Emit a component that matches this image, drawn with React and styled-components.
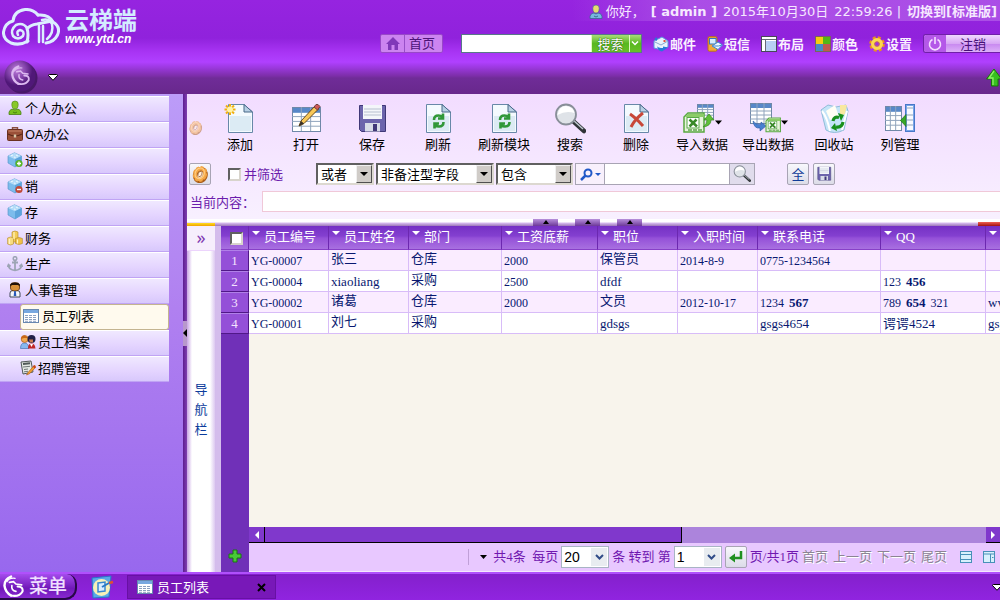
import React, { useState } from "react";
import styled, { createGlobalStyle, css } from "styled-components";

const GlobalStyle = createGlobalStyle`
  * {
    box-sizing: border-box;
  }
  body {
    margin: 0;
    overflow: hidden;
    font-family: "Noto Sans", "Noto Sans CJK SC", sans-serif;
    font-size: 13px;
    line-height: 18px;
    color: #000;
  }
  button, input, select {
    font: inherit;
    color: inherit;
    margin: 0;
    padding: 0;
    border-radius: 0;
  }
  button {
    border: 0;
    background: none;
    cursor: pointer;
    white-space: nowrap;
  }
  a {
    color: inherit;
    text-decoration: none;
  }
  svg {
    display: block;
    flex: none;
  }
`;

/* ---------- icons ---------- */

const Svg = ({ w = 16, h = w, vw = w, vh = h, children }) => (
  <svg width={w} height={h} viewBox={`0 0 ${vw} ${vh}`} aria-hidden="true">
    {children}
  </svg>
);

const Caret = ({ color = "#000", w = 8, h = 4, stroke }) => (
  <Svg w={w} h={h}>
    <path d={`M0 0H${w}L${w / 2} ${h}Z`} fill={color} stroke={stroke} />
  </Svg>
);

const CaretOutlined = () => (
  <Svg w={10} h={7}>
    <path d="M.5 1.5Q.5.5 1.5.5H8.500Q9.500.5 9.500 1.500L5 6.300Z" fill="#fff" stroke="#000" />
  </Svg>
);

const UserIcon = ({ head = "#e8dc70", body = "#78b8e0", line = "#3a6a90" }) => (
  <Svg>
    <path d="M2 14.500Q1.500 9.500 6 9L8 10 10 9Q14.500 9.500 14 14.500Z" fill={body} stroke={line} strokeWidth=".8" />
    <path d="M4.800 4.500Q4.500 1 8 1T11.200 4.500Q11 9 8 9T4.800 4.500Z" fill={head} stroke={line} strokeWidth=".6" />
    <path d="M6 12Q8 14 10 12" fill="none" stroke={line} />
  </Svg>
);

const BriefcaseIcon = () => (
  <Svg>
    <path d="M5.500 4V1.800H10.500V4" fill="none" stroke="#8a5040" strokeWidth="1.400" />
    <rect x=".5" y="3.500" width="15" height="11" rx="1" fill="#9a5038" stroke="#6a3020" />
    <path d="M1 8Q8 12 15 8" fill="none" stroke="#5a2818" strokeWidth="1.200" />
    <path d="M1.500 5H14.500" stroke="#c88468" />
    <rect x="6.800" y="8.500" width="2.400" height="3" fill="#d8c8a8" />
  </Svg>
);

const CubeIcon = ({ badge }) => (
  <Svg>
    <path d="M1 4L7.500.8 14.500 4V11L8 15 1 11Z" fill="#7cbcec" stroke="#5090c8" strokeWidth=".6" />
    <path d="M1 4L7.500.8 14.500 4 8 7.200Z" fill="#b4dcf8" />
    <path d="M8 7.200L14.500 4V11L8 15Z" fill="#5ca4dc" />
    <path d="M4 3.800L6 3M9 3L11 4M7 5L8.500 5.500" stroke="#eef8ff" />
    {badge && <circle cx="12" cy="11.500" r="3.600" fill={badge === "plus" ? "#58b428" : "#c04838"} />}
    {badge && <path d={badge === "plus" ? "M10 11.500H14M12 9.500V13.500" : "M10 11.500H14"} stroke="#fff" strokeWidth="1.400" />}
  </Svg>
);

const CoinsIcon = () => (
  <Svg>
    <path d="M5 2Q8 0 11 2V12H5Z" fill="#f4cc58" stroke="#b08828" strokeWidth=".6" />
    <path d="M.6 8Q3.500 6 6.500 8V14Q3.500 16 .6 14Z" fill="#f8dc80" stroke="#b08828" strokeWidth=".6" />
    <path d="M8.500 8.500Q12 6.500 15.400 8.500V13.500Q12 15.500 8.500 13.500Z" fill="#f0c048" stroke="#b08828" strokeWidth=".6" />
    <path d="M7 2V9M2.500 9V14M10.500 9.500V13.500" stroke="#fff4c0" strokeWidth="1.200" />
  </Svg>
);

const AnchorIcon = () => (
  <Svg>
    <circle cx="8" cy="2.500" r="1.800" fill="none" stroke="#9ca4b4" strokeWidth="1.500" />
    <path d="M8 4V14M5 6.500H11M1.500 9.500Q2 14 8 14.300 14 14 14.500 9.500M.5 11L1.500 8.800 3.500 10.500M15.500 11L14.500 8.800 12.500 10.500" fill="none" stroke="#9ca4b4" strokeWidth="1.800" />
  </Svg>
);

const ManagerIcon = () => (
  <Svg>
    <path d="M3 15V11Q3 8.500 6 8.500H10Q13 8.500 13 11V15Z" fill="#f4f6fa" stroke="#404858" />
    <path d="M3.500 3Q3.500 .7 8 .7T12.500 3V6Q12.500 9 8 9T3.500 6Z" fill="#d89038" stroke="#5a3008" strokeWidth=".8" />
    <path d="M3.300 4.500V2.500Q4 .5 8 .5T12.700 2.500V4.500L11 3H5Z" fill="#201008" />
    <path d="M7.200 9H8.800L9.300 14H6.700Z" fill="#2858b8" />
  </Svg>
);

const PeopleIcon = () => (
  <Svg>
    <path d="M.5 14.500Q.5 9 4.500 9T9 14.500Z" fill="#88b8f0" stroke="#3868a8" strokeWidth=".6" />
    <circle cx="4.700" cy="5" r="3.500" fill="#f0a850" stroke="#a85818" strokeWidth=".7" />
    <path d="M1 5Q1 1 5 1.500L8 4 4 4Z" fill="#c86818" />
    <path d="M8 14.500Q8 9.500 11.500 9.500T15.500 14.500Z" fill="#c02828" />
    <circle cx="11.500" cy="5" r="4" fill="#202048" />
    <path d="M9 5.500H13V8.500H10Z" fill="#c87850" />
    <path d="M10 10L11.500 13 13 10Z" fill="#fff" />
  </Svg>
);

const NoteIcon = () => (
  <Svg>
    <path d="M1 2L11 1 13 12 3 14Z" fill="#e4e8e4" stroke="#505858" />
    <path d="M3 4L10 3.300" stroke="#505858" strokeWidth="2" />
    <path d="M3 7L10 6.300M4 9.500L8 9M4 11.800L8 11.300" stroke="#707878" />
    <path d="M14.500 5L8 12.500 6.500 15 9.500 13.800 16 7Z" fill="#f0a030" stroke="#a85810" strokeWidth=".6" />
    <path d="M13.500 6L15 7.800" stroke="#d03020" strokeWidth="1.500" />
  </Svg>
);

const ListIcon = () => (
  <Svg w={16} h={14}>
    <rect x=".5" y=".5" width="15" height="13" fill="#fff" stroke="#6888b0" />
    <path d="M1 2.500H15" stroke="#78a8e0" strokeWidth="3" />
    <path d="M2 6.500H14M2 8.500H14M2 10.500H14M2 12.300H14" stroke="#8ca0c0" strokeDasharray="3 1" />
  </Svg>
);

const CookieIcon = ({ size = 18, faded }) => (
  <svg width={size} height={size} viewBox="0 0 18 18" opacity={faded ? 0.5 : 1} aria-hidden="true">
    <g transform="rotate(25 9 9)">
      <ellipse cx="9.800" cy="9.800" rx="5" ry="6" fill="none" stroke="#a85c18" strokeWidth="4.500" />
      <ellipse cx="9" cy="9" rx="5.800" ry="6.800" fill="none" stroke="#f0a040" strokeWidth="2.500" strokeDasharray="3 1.500" />
      <ellipse cx="9" cy="9" rx="4.500" ry="5.500" fill="none" stroke="#f4a848" strokeWidth="3.500" />
      <ellipse cx="8.500" cy="8.500" rx="4.500" ry="5.500" fill="none" stroke="#ffd088" strokeWidth="1" />
      <ellipse cx="9" cy="9" rx="1.800" ry="2.800" fill="#fff0e0" stroke="#a05818" strokeWidth=".7" />
    </g>
  </svg>
);

const PageShape = () => (
  <>
    <path d="M4.500 1.500H20L28.500 9V29.500H4.500Z" fill="#f4fafe" stroke="#6888a8" />
    <path d="M6 13H27V28H6Z" fill="#dcebf4" />
    <path d="M20 1.500V9H28.500Z" fill="#b8d0e4" stroke="#486888" />
  </>
);

const AddIcon = () => (
  <Svg w={32}>
    <PageShape />
    <path d="M6 1V12M.5 6.500H11.500M2 2.500L10 10.500M10 2.500L2 10.500" stroke="#f0b010" strokeWidth="2" />
    <circle cx="6" cy="6.500" r="3" fill="#fff4a8" />
  </Svg>
);

const TableGrid = ({ x = 0, y = 0, w = 24, h = 24 }) => (
  <>
    <rect x={x + 0.5} y={y + 0.5} width={w} height={h} fill="#fff" stroke="#7088a8" />
    <rect x={x + 1} y={y + 1} width={w - 1} height={h / 5} fill="#5888c8" />
    <path
      d={`M${x + w / 3} ${y}v${h}M${x + (w * 2) / 3} ${y}v${h}M${x} ${y + h * 0.4}h${w}M${x} ${y + h * 0.6}h${w}M${x} ${y + h * 0.8}h${w}`}
      stroke="#90a4bc"
    />
  </>
);

const OpenIcon = () => (
  <Svg w={32}>
    <TableGrid x={2} y={4} w={28} h={24} />
    <path d="M25 3L11 18 9 23 14 20.500 28.500 6Z" fill="#f8c858" stroke="#684818" />
    <path d="M24 4L26 1.500Q28 .5 30 3.500L27.500 7Z" fill="#d05858" stroke="#704040" />
    <path d="M11 18L9 23 14 20.500Z" fill="#383028" />
  </Svg>
);

const DiskIcon = ({ size = 32 }) => (
  <Svg w={size} vw={32} vh={32}>
    <path d="M3.500 2.500H29.500V28.500H5.500L3.500 26.500Z" fill="#6c64ac" stroke="#403878" />
    <rect x="7" y="2" width="19" height="14" fill="#f4f6fa" />
    <path d="M8 6H25M8 9H25M8 12H25" stroke="#b8c0d0" />
    <rect x="9" y="20" width="15" height="8.500" fill="#d8dce8" />
    <rect x="17" y="21" width="4" height="7" fill="#403878" />
  </Svg>
);

const RefreshIcon = () => (
  <Svg w={32}>
    <PageShape />
    <path
      d="M12 17Q12 12.500 16.500 12.500 19 12.500 20.500 14M21 10.500V15.500H16M21.500 19Q21.500 23.500 17 23.500 14.500 23.500 13 22M12.500 25.500V20.500H17"
      fill="none"
      stroke="#309838"
      strokeWidth="2.600"
    />
  </Svg>
);

const MagnifierIcon = ({ size = 32 }) => (
  <Svg w={size} vw={32} vh={32}>
    <path d="M19 18L30 28" stroke="#303438" strokeWidth="4.500" strokeLinecap="round" />
    <path d="M19 17L29 26" stroke="#c0c8d0" strokeWidth="1.500" />
    <circle cx="12" cy="11.500" r="10" fill="#dfe3e8" stroke="#888e98" strokeWidth="1.800" />
    <path d="M3.500 12Q5 3 12 3 19 3.500 20.500 10 12 7 3.500 12Z" fill="#fff" />
  </Svg>
);

const DeleteIcon = () => (
  <Svg w={32}>
    <PageShape />
    <path d="M10 11Q16 15 23 23M23 10Q15 16 11 24" fill="none" stroke="#c84838" strokeWidth="3" />
  </Svg>
);

const ExcelBox = ({ x, y, s = 1 }) => (
  <g transform={`translate(${x} ${y}) scale(${s})`}>
    <path d="M4 0H20V19H0V4Z" fill="#e8f4dc" stroke="#58a840" strokeWidth="1.500" />
    <path d="M1 4L4 1H20V4Z" fill="#8ccc68" />
    <rect x="3" y="4.500" width="12" height="10.500" fill="#fff" stroke="#58a848" />
    <path d="M5.500 6.500L13 13.500M12.500 6.500L5.500 13.500" stroke="#388828" strokeWidth="2.500" />
    <path d="M4 17H18" stroke="#80b870" strokeWidth="2" strokeDasharray="4 1" />
  </g>
);

const ImportIcon = () => (
  <Svg w={40} h={32}>
    <TableGrid x={15} y={1} w={16} h={14} />
    <ExcelBox x={2} y={10} />
    <path d="M21 24Q29 23 29 17H32L27 11 22 17H25Q25 21 21 24Z" fill="#60c038" stroke="#388820" strokeWidth=".7" />
    <path d="M33 17.500H40L36.500 21.500Z" />
  </Svg>
);

const ExportIcon = () => (
  <Svg w={40} h={32}>
    <TableGrid x={2} y={0} w={21} h={20} />
    <path d="M5 18Q6 26 12 25V28L18 23 13 19V21.500Q8 22 5 18Z" fill="#4880d0" stroke="#2858a0" strokeWidth=".6" />
    <ExcelBox x={18} y={15} s={0.72} />
    <path d="M33 17.500H40L36.500 21.500Z" />
  </Svg>
);

const RecycleIcon = () => (
  <Svg w={32}>
    <path d="M3 7L10 2 18 4 28 2 30 8 26 27Q16 32 8 27Z" fill="#c4e4f8" stroke="#90bcd8" />
    <path d="M8 8L17 2 21 14 12 17Z" fill="#fffef4" />
    <path d="M22 2L29 2 27 11 22 13Z" fill="#f8e8a0" />
    <path d="M4 8Q9 14 12 28M29 8L24 27" fill="none" stroke="#fff" strokeWidth="2" />
    <path d="M15 18Q16 13 21 14.500M25 19Q24 25 18 24" fill="none" stroke="#18901c" strokeWidth="3.200" />
    <path d="M20 10L26 12 23 18ZM19 28L13 25 17 20Z" fill="#18901c" />
  </Svg>
);

const ColumnsIcon = () => (
  <Svg w={32}>
    <TableGrid x={1} y={3} w={16} h={24} />
    <rect x="21.500" y="1.500" width="9" height="27" fill="#78a4e8" stroke="#4878c8" />
    <rect x="23" y="3" width="6" height="24" fill="#f8faff" />
    <path d="M23 5H29M23 12H29M23 17H29M23 22H29" stroke="#90a4bc" />
    <path d="M16.500 17.500L22 11.500V23.500Z" fill="#38a828" stroke="#207018" strokeWidth=".7" />
  </Svg>
);

const MailIcon = () => (
  <Svg>
    <path d="M1 5L9 1 15 5V11L9 14 1 12Z" fill="#e8f2fc" stroke="#5898e0" />
    <path d="M1 5.500L8 9 15 5" fill="none" stroke="#88a8d0" />
    <path d="M1 3L4 5V1M9 15.500L15 11.500 10 10.500V12Q5 12 4 10 5 15 9 15.500Z" fill="#2878d8" />
    <rect x="10.500" y="4" width="2" height="2" fill="#e05040" />
  </Svg>
);

const SmsIcon = () => (
  <Svg>
    <rect x="1" y=".7" width="9" height="14.500" rx="1.500" fill="#f4a838" stroke="#b87018" />
    <rect x="2.500" y="2.500" width="6.500" height="5.500" fill="#d8ecfc" stroke="#3878c0" />
    <path d="M5 10L11 6 15.500 9 11 13.500Z" fill="#f0f8ff" stroke="#4088d0" />
    <path d="M6 10L11.500 10 15 9" fill="none" stroke="#4088d0" />
  </Svg>
);

const LayoutIcon = () => (
  <Svg>
    <rect x=".5" y=".5" width="15" height="15" fill="#fff" stroke="#484858" />
    <path d="M1 3.500H15M4.500 4V15" stroke="#686878" />
    <rect x="5" y="5" width="10" height="10" fill="#b8d0f4" />
  </Svg>
);

const ColorIcon = () => (
  <Svg>
    <rect width="16" height="16" fill="#786858" />
    <rect x="1" y="1" width="7" height="7" fill="#f8cc10" />
    <rect x="8" y="1" width="7" height="7" fill="#50b818" />
    <rect x="1" y="8" width="7" height="7" fill="#4888c8" />
    <rect x="8" y="8" width="7" height="7" fill="#c05850" />
  </Svg>
);

const GearIcon = () => (
  <Svg>
    <circle cx="8" cy="8" r="6.300" fill="none" stroke="#e89020" strokeWidth="3" strokeDasharray="2.900 2.048" />
    <circle cx="8" cy="8" r="4.300" fill="none" stroke="#fcd850" strokeWidth="3.400" />
    <circle cx="8" cy="8" r="2.300" fill="#a030e0" stroke="#d88818" strokeWidth=".7" />
  </Svg>
);

const HomeIcon = () => (
  <Svg w={14}>
    <path d="M7 0L14 7H12V13H8.500V8H5.500V13H2V7H0Z" fill="#8038b8" />
  </Svg>
);

const PowerIcon = () => (
  <Svg w={14}>
    <path d="M4.500 2.500A5.500 5.500 0 1 0 9.500 2.500M7 0V7" fill="none" stroke="#f4dcff" strokeWidth="1.600" />
  </Svg>
);

const GreenUp = () => (
  <Svg w={16} h={19}>
    <path d="M8 1L15.500 11H12V18H5.500V11H.500Z" fill="#38c020" stroke="#187808" />
    <path d="M8 3L3 10H7V17" fill="none" stroke="#90f068" strokeWidth="1.300" />
  </Svg>
);

const Swirl = ({ color = "#fff" }) => (
  <g fill="none" stroke={color} strokeLinecap="round">
    <path d="M11 2Q3 5 3 13 4 21 11 25" strokeWidth="3" />
    <path d="M11 25Q21 27 25 20 26 14 19 14" strokeWidth="2.500" />
    <path d="M6 8Q9 3 16 4" strokeWidth="1.500" />
    <path d="M9 9L14 8 17 11 24 12" strokeWidth="2" />
    <path d="M12 13Q11 19 17 20" strokeWidth="2" />
  </g>
);

const OrbIcon = () => (
  <Svg w={34}>
    <defs>
      <radialGradient id="orb" cx="40%" cy="30%">
        <stop offset="0" stopColor="#c080dc" />
        <stop offset=".6" stopColor="#8040a8" />
        <stop offset="1" stopColor="#501878" />
      </radialGradient>
    </defs>
    <circle cx="18" cy="18" r="15.500" fill="#481868" />
    <circle cx="16" cy="16" r="15.500" fill="url(#orb)" />
    <g transform="translate(6 5) scale(.75)">
      <Swirl color="#dcb8f0" />
    </g>
  </Svg>
);

const CloudLogo = () => (
  <Svg w={58} h={38}>
    <g fill="none" stroke="#dceeff" strokeLinecap="round" strokeLinejoin="round">
      <path d="M26 33Q18 38 9 35 1 31 1.500 24 3 15 11 13 12 3 23 1.500 31 1 36 7" strokeWidth="3" />
      <path d="M36 7Q47 6 51 14 59 19 55.500 27 52 34 44 35" strokeWidth="3" />
      <path d="M16 27Q14 23 18 22 23 23 21 28 16 33 11 28 8 22 14 17 21 14 25 20" strokeWidth="2.500" />
      <path d="M25 20Q27 27 25 34M25 21Q28 17 35 16L50 13" strokeWidth="3" />
      <path d="M37 18V34M41 18V34" strokeWidth="2.500" />
      <path d="M40 12Q47 10 50 16 52 25 45 31" strokeWidth="2.500" />
    </g>
  </Svg>
);

const DesktopIcon = () => (
  <Svg w={24}>
    <path d="M2 3L21 1 19 22 3 23Z" fill="#58a8e8" stroke="#2878c8" />
    <circle cx="11.500" cy="12.500" r="8.500" fill="#f8f0b8" />
    <path d="M8 8L15 7 15 16 8 17Z" fill="#d8ecff" stroke="#3888d0" strokeWidth="1.500" />
    <path d="M12 12L19 8" stroke="#2878c8" strokeWidth="2" />
    <path d="M19 8L23 7" stroke="#e05030" strokeWidth="2.500" />
  </Svg>
);

const PlusIcon = () => (
  <Svg w={14}>
    <path d="M5 1H9V5H13V9H9V13H5V9H1V5H5Z" fill="#48c838" stroke="#187810" />
  </Svg>
);

const EnterIcon = () => (
  <Svg w={14}>
    <path d="M12 1V8H4" fill="none" stroke="#209020" strokeWidth="2.500" />
    <path d="M0 8L6 3.500V12.500Z" fill="#209020" />
  </Svg>
);

const PaneIcon = ({ side }) => (
  <Svg w={12}>
    <rect x=".5" y=".5" width="11" height="11" fill="#d8f0fc" stroke="#4890b8" />
    {side ? (
      <path d="M1 3H11M7.500 3V11M9 6.500H10.500" stroke="#4890b8" />
    ) : (
      <path d="M1 3.500H11M1 8.500H11" stroke="#4890b8" />
    )}
  </Svg>
);

/* ---------- header ---------- */

const Page = styled.div`
  height: 100vh;
  display: flex;
  flex-direction: column;
  overflow: hidden;
`;

const Header = styled.header`
  flex: none;
  height: 94px;
  color: #fff;
  background: linear-gradient(
    #9624e0 0,
    #9022dc 38px,
    #a834f4 52px,
    #b040ff 62px,
    #9a38dc 68px,
    #7c2ea8 76px,
    #702c98 78px,
    #68288c 94px
  );
`;

const HeaderTop = styled.div`
  display: flex;
  justify-content: space-between;
  height: 60px;
`;

const Brand = styled.div`
  display: flex;
  gap: 5px;
  padding: 8px 0 0 2px;
`;

const BrandName = styled.div`
  font-size: 24px;
  font-weight: bold;
  line-height: 24px;
  color: #d4ecff;
  white-space: nowrap;
`;

const BrandUrl = styled.div`
  font: italic bold 12px/14px "Liberation Sans", sans-serif;
  color: #fff;
`;

const HeaderRight = styled.div`
  display: flex;
  flex-direction: column;
  align-items: flex-end;
  gap: 13px;
`;

const Greeting = styled.div`
  display: flex;
  align-items: center;
  gap: 6px;
  height: 21px;
  padding: 2px 3px 0 16px;
  background: linear-gradient(90deg, rgba(176, 88, 232, 0), rgba(176, 88, 232, 0.8) 120px);
  font-family: "DejaVu Sans", "Noto Sans CJK SC", sans-serif;
  color: #f6e8ff;
  white-space: nowrap;
`;

const User = styled.span`
  display: flex;
  align-items: center;
  gap: 2px;
`;

const Tools = styled.nav`
  display: flex;
  align-items: center;
  gap: 11px;
  height: 19px;
`;

const HomeLink = styled.a`
  display: flex;
  align-items: center;
  width: 63px;
  height: 19px;
  margin-right: 7px;
  padding-left: 5px;
  gap: 4px;
  border: 1px solid #9848c8;
  border-radius: 2px;
  background: #cc84f0;
  color: #4c1478;

  span {
    border-left: 1px solid #9850c8;
    padding-left: 4px;
    line-height: 17px;
  }
`;

const SearchForm = styled.form`
  display: flex;
  width: 181px;
  height: 19px;
  border: 1px solid #587888;
`;

const SearchInput = styled.input`
  flex: 1;
  min-width: 0;
  border: 0;
  background: #fff;
  color: #000;
  outline: none;
`;

const GreenButton = styled.button`
  display: flex;
  align-items: center;
  justify-content: center;
  width: ${(props) => props.$width};
  line-height: 16px;
  border-left: 1px solid #e0f8c0;
  background: linear-gradient(#a8dc78, #58b820 50%, #68c028);
  color: #fff;
  text-shadow: 0 0 1px #205000, 0 0 1px #205000;
`;

const ToolLink = styled.a`
  display: flex;
  align-items: center;
  gap: 1px;
  font-weight: bold;
  line-height: 16px;
  color: #faf0ff;
  white-space: nowrap;
`;

const Logout = styled.button`
  display: flex;
  align-items: center;
  width: 77px;
  height: 19px;
  border: 1px solid #7020a8;
  border-right: 0;
  border-radius: 3px 0 0 3px;
  background: linear-gradient(#f0d8ff, #d8a8f4 50%, #c888f0 52%, #dcb0f8);
  color: #481078;
  line-height: 16px;
  overflow: hidden;

  i {
    display: flex;
    align-items: center;
    justify-content: center;
    width: 22px;
    height: 17px;
    background: #b458e8;
  }
  span {
    flex: 1;
  }
`;

const HeaderStrip = styled.div`
  display: flex;
  align-items: center;
  height: 34px;
  padding-left: 4px;
  gap: 10px;

  button:last-child {
    margin-left: auto;
    margin-right: -2px;
  }
`;

/* ---------- sidebar ---------- */

const Body = styled.div`
  flex: 1;
  min-height: 0;
  display: flex;
`;

const Sidebar = styled.aside`
  flex: none;
  width: 183px;
  padding: 2px 14px 0 0;
  background: linear-gradient(#bc9cf8, #b080f0 45%, #9868ee);
`;

const MenuItem = styled.a`
  display: flex;
  align-items: center;
  gap: 2px;
  height: 26px;
  padding-bottom: 3px;
  padding-left: ${(props) => (props.$sub ? "20px" : "7px")};
  border-top: 1px solid #fff;
  border-bottom: 1px solid #c0a4f4;
  background: linear-gradient(#f0e8ff, #e4d4ff 60%, #d8c8fc);

  ${(props) =>
    props.$active &&
    css`
      gap: 3px;
      margin-left: 20px;
      padding-left: 2px;
      border: 1px solid #c4b490;
      border-radius: 3px;
      background: #fffaee;
    `}
`;

const Splitter = styled.div`
  flex: none;
  display: flex;
  align-items: center;
  width: 4px;
  background: linear-gradient(90deg, #5c1c90, #8040b0);
`;

const SplitterHandle = styled.button`
  display: flex;
  align-items: center;
  width: 4px;
  height: 25px;
  background: #b898cc;
`;

/* ---------- toolbar and filter ---------- */

const Main = styled.main`
  flex: 1;
  min-width: 0;
  display: flex;
  flex-direction: column;
  background: linear-gradient(#f2dcff, #f8f0ff 125px);
`;

const Toolbar = styled.div`
  display: flex;
  height: 66px;
  padding-top: 9px;
`;

const ToolbarGear = styled.div`
  width: 20px;
  padding: 17px 0 0 1px;
`;

const ToolButton = styled.button`
  display: flex;
  flex-direction: column;
  align-items: center;
  width: 66px;
`;

const FilterBar = styled.div`
  display: flex;
  align-items: center;
  gap: 2px;
  height: 28px;
  padding-left: 2px;
`;

const IconButton = styled.button`
  display: flex;
  align-items: center;
  justify-content: center;
  width: 22px;
  height: 22px;
  border: 1px solid #a8a4b4;
  border-radius: 2px;
  background: linear-gradient(#f8f8fc, #dcdce8);
  color: #103c98;
`;

const CheckLabel = styled.label`
  display: flex;
  align-items: center;
  gap: 3px;
  width: 86px;
  margin-left: 15px;
  color: #6c1cac;
`;

const CheckBox = styled.input`
  appearance: none;
  width: 13px;
  height: 13px;
  flex: none;
  background: #fff;
  border: 2px solid;
  border-color: #606060 #d8d4cc #d8d4cc #606060;

  &:checked {
    background: #6c1cac;
  }
`;

const SelectBox = styled.span`
  position: relative;
  display: block;
  width: ${(props) => props.$width};
  height: 22px;
`;

const SelectField = styled.select`
  appearance: none;
  display: block;
  width: 100%;
  height: 100%;
  padding-left: 3px;
  outline: none;
  background: #fff;
  color: #000;
  border: ${(props) => (props.$flat ? "1px solid #a8b4c4" : "2px solid")};
  ${(props) => !props.$flat && "border-color: #606060 #dcd8d0 #dcd8d0 #606060;"}
  ${(props) => props.$flat && 'font: 14px "Liberation Sans", sans-serif; padding-left: 2px;'}
`;

const SelectArrow = styled.span`
  position: absolute;
  top: 2px;
  right: 2px;
  bottom: 2px;
  width: 16px;
  display: flex;
  align-items: center;
  justify-content: center;
  pointer-events: none;
  background: ${(props) => (props.$flat ? "#e8ecf0" : "#d0ccc8")};
  ${(props) =>
    !props.$flat &&
    css`
      border: 1px solid;
      border-color: #f0f0f0 #505050 #505050 #f0f0f0;
    `}
`;

const SearchCombo = styled.div`
  display: flex;
  width: 180px;
  height: 22px;
  margin-right: 30px;
  border: 1px solid #a8a4b4;

  button {
    display: flex;
    align-items: center;
    justify-content: center;
    gap: 2px;
    width: 29px;
    background: #f8f0fc;
    border-right: 1px solid #a8a4b4;
  }
  button:last-child {
    width: 25px;
    border-right: 0;
    border-left: 1px solid #a8a4b4;
    background: #e0dcec;
  }
`;

const FilterActions = styled.div`
  display: flex;
  gap: 4px;
`;

const ContentRow = styled.label`
  display: flex;
  align-items: center;
  gap: 7px;
  height: 31px;
  padding: 0 0 4px 3px;
  color: #6c1cac;
  white-space: nowrap;

  input {
    flex: 1;
    height: 21px;
    border: 1px solid #f0c8d8;
    border-right: 0;
    background: #fff;
    outline: none;
  }
`;

const Rail = styled.div`
  display: flex;
  justify-content: space-between;
  height: 7px;
  background: linear-gradient(#fff 3px, #d8bcf0 4px, #9c78b8 7px);

  &::before,
  &::after {
    content: "";
    width: 28px;
    height: 3px;
    align-self: flex-end;
    background: linear-gradient(#ffe020, #f0a000);
  }
  &::after {
    width: 22px;
    height: 4px;
    background: linear-gradient(#f06050, #a01010);
  }
`;

const RailHandles = styled.div`
  display: flex;
  gap: 17px;
  padding-right: 18px;

  button {
    display: flex;
    justify-content: center;
    padding-top: 1px;
    width: 25px;
    background: linear-gradient(#b890dc, #6c3898);
  }
`;

/* ---------- data grid ---------- */

const Work = styled.div`
  flex: 1;
  min-height: 0;
  display: flex;
`;

const NavColumn = styled.button`
  flex: none;
  display: flex;
  flex-direction: column;
  align-items: stretch;
  width: 34px;
  border-right: 6px solid #d4bcec;
  background: linear-gradient(90deg, #c8a4e4, #fff 5px, #fff 23px, #dcc8f0 28px);
  color: #0c3c9c;
  line-height: 20px;

  b {
    height: 25px;
    line-height: 23px;
    font-size: 18px;
    font-weight: normal;
    color: #8038b0;
    background: #f6eefc;
    border-bottom: 1px solid #ecd4fc;
  }
  span {
    margin: auto;
    padding-bottom: 6px;
    width: 13px;
    white-space: normal;
  }
`;

const GridPanel = styled.div`
  flex: 1;
  min-width: 0;
  display: flex;
  flex-direction: column;
  overflow: hidden;
  background: linear-gradient(90deg, #7030b8 28px, #f8f4ec 28px);
`;

const TableWrap = styled.div`
  flex: 1;
  min-height: 0;
  overflow: hidden;
`;

const Table = styled.table`
  table-layout: fixed;
  width: 885px;
  border-spacing: 0;
  font: 12px/18px "Liberation Serif", "Noto Sans CJK SC", serif;
  color: #081870;
`;

const HeadCell = styled.th`
  height: 24px;
  padding: 0;
  vertical-align: top;
  text-align: left;
  font: 13px/22px "Liberation Serif", "Noto Sans CJK SC", serif;
  color: #fff;
  white-space: nowrap;
  border-right: 1px solid #6c28b0;
  border-bottom: 1px solid #8840c8;
  background: linear-gradient(#7430c4, #8440d0 10px, #9450d8 12px, #a870e0);

  div {
    display: flex;
    gap: 4px;
    padding-left: 3px;
  }
  svg {
    margin-top: 5px;
  }
`;

const CheckCell = styled(HeadCell)`
  text-align: center;
  padding: 6px 0 0 3px;

  input {
    display: block;
    margin: 0 auto;
  }
`;

const NumCell = styled.th`
  height: 21px;
  padding: 0;
  font-size: 13px;
  line-height: 18px;
  font-weight: normal;
  color: #f4e4ff;
  background: #9450d8;
  border-top: 1px solid #b080e8;
  border-bottom: 1px solid #501888;
  border-right: 1px solid #501888;
`;

const Cell = styled.td`
  height: 21px;
  padding: ${(props) => (props.$cjk ? "0" : "2px")} 0 0 2px;
  font-size: ${(props) => (props.$text ? "13px" : "12px")};
  vertical-align: top;
  white-space: nowrap;
  overflow: hidden;
  border-right: 1px solid #d8bcf8;
  border-bottom: 1px solid #d8bcf8;
  background: ${(props) => (props.$odd ? "#faecff" : "#fff")};

  b {
    margin: 0 2px;
    font-size: 13px;
    line-height: 16px;
  }
`;

const GridFoot = styled.div`
  flex: none;
  display: flex;
  height: 45px;
`;

const AddRow = styled.button`
  display: flex;
  justify-content: center;
  width: 28px;
  padding-top: 22px;
`;

const FootRight = styled.div`
  flex: 1;
  min-width: 0;
`;

const ScrollBar = styled.div`
  display: flex;
  height: 16px;
  background: #ac84dc;

  button {
    display: flex;
    align-items: center;
    justify-content: center;
    width: 16px;
    background: #8038cc;
    border-bottom: 1px solid #000;
  }
  button:first-child {
    border-right: 1px solid #000;
  }
  button:last-child {
    width: 14px;
    margin-left: auto;
  }
`;

const ScrollThumb = styled.div`
  flex: 0 0 417px;
  background: #8038cc;
  border-right: 1px solid #000;
  border-bottom: 1px solid #000;
`;

const Pager = styled.div`
  display: flex;
  align-items: center;
  justify-content: flex-end;
  height: 29px;
  padding-right: 5px;
  gap: 3px;
  background: #e8c8ff;
  border-bottom: 1px solid #f4e8fc;
  color: #7018b0;
  font-family: "Liberation Serif", "Noto Sans CJK SC", serif;
  white-space: nowrap;
`;

const PagerMenu = styled.button`
  display: flex;
  align-items: center;
  width: 22px;
  height: 16px;
  padding-left: 11px;
  border-left: 1px solid #c0a0d8;
`;

const PageLink = styled.a`
  color: #8c8494;
  text-shadow: 1px 1px 0 #fff;
  margin-right: 2px;
`;

const PaneButton = styled.button`
  margin-left: 8px;
`;

/* ---------- task bar ---------- */

const TaskBar = styled.footer`
  flex: none;
  display: flex;
  align-items: center;
  gap: 13px;
  height: 28px;
  border-top: 2px solid #b050fc;
  background: linear-gradient(#8420cc, #9024e0);
  color: #fff;

  > button:last-child {
    margin-left: auto;
    margin-right: -2px;
  }
`;

const StartButton = styled.button`
  display: flex;
  align-items: center;
  gap: 4px;
  width: 77px;
  height: 26px;
  padding-left: 2px;
  border-right: 2px solid #280848;
  border-bottom: 2px solid #280848;
  border-radius: 0 10px 12px 0;
  background: linear-gradient(#a44cec, #7018b8 60%, #8828d0);
  font-size: 19px;
  font-weight: 500;
  line-height: 24px;
  color: #f0e0ff;
`;

const TaskTab = styled.div`
  display: flex;
  align-items: center;
  gap: 4px;
  width: 149px;
  height: 24px;
  padding: 0 9px;
  border: 1px solid #6810a4;
  background: #7818b8;

  button {
    margin-left: auto;
  }
`;

const menu = [
  { label: "个人办公", icon: <UserIcon head="#88c828" body="#78c020" line="#488010" /> },
  { label: "OA办公", icon: <BriefcaseIcon /> },
  { label: "进", icon: <CubeIcon badge="plus" /> },
  { label: "销", icon: <CubeIcon badge="minus" /> },
  { label: "存", icon: <CubeIcon /> },
  { label: "财务", icon: <CoinsIcon /> },
  { label: "生产", icon: <AnchorIcon /> },
  { label: "人事管理", icon: <ManagerIcon /> },
  { label: "员工列表", icon: <ListIcon />, active: true },
  { label: "员工档案", icon: <PeopleIcon />, sub: true },
  { label: "招聘管理", icon: <NoteIcon />, sub: true },
];

const links = [
  ["邮件", <MailIcon />],
  ["短信", <SmsIcon />],
  ["布局", <LayoutIcon />],
  ["颜色", <ColorIcon />],
  ["设置", <GearIcon />],
];

const tools = [
  ["添加", <AddIcon />],
  ["打开", <OpenIcon />],
  ["保存", <DiskIcon />],
  ["刷新", <RefreshIcon />],
  ["刷新模块", <RefreshIcon />],
  ["搜索", <MagnifierIcon />],
  ["删除", <DeleteIcon />],
  ["导入数据", <ImportIcon />],
  ["导出数据", <ExportIcon />],
  ["回收站", <RecycleIcon />],
  ["列管理", <ColumnsIcon />],
];

const columns = [
  ["员工编号", 80],
  ["员工姓名", 80],
  ["部门", 93],
  ["工资底薪", 96],
  ["职位", 80],
  ["入职时间", 80],
  ["联系电话", 123],
  ["QQ", 105],
  ["", 120],
];

// *...* marks the part of a number that is set bold
const rows = [
  ["YG-00007", "张三", "仓库", "2000", "保管员", "2014-8-9", "0775-1234564", "", ""],
  ["YG-00004", "xiaoliang", "采购", "2500", "dfdf", "", "", "123 *456*", ""],
  ["YG-00002", "诸葛", "仓库", "2000", "文员", "2012-10-17", "1234 *567*", "789 *654* 321", "www"],
  ["YG-00001", "刘七", "采购", "", "gdsgs", "", "gsgs4654", "谔谔4524", "gsgs"],
];

const renderValue = (value) =>
  value.split("*").map((part, i) => (i % 2 ? <b key={i}>{part}</b> : part));

const Select = ({ label, width, options, flat }) => (
  <SelectBox $width={width}>
    <SelectField aria-label={label} $flat={flat}>
      {options.map((o) => (
        <option key={o}>{o}</option>
      ))}
    </SelectField>
    <SelectArrow $flat={flat}>
      {flat ? (
        <Svg w={9} h={6}>
          <path d="M1 1L4.500 4.500 8 1" fill="none" stroke="#304c88" strokeWidth="2" />
        </Svg>
      ) : (
        <Caret />
      )}
    </SelectArrow>
  </SelectBox>
);

const DataGrid = () => (
  <Table>
    <colgroup>
      <col style={{ width: 28 }} />
      {columns.map(([name, width]) => (
        <col key={name} style={{ width }} />
      ))}
    </colgroup>
    <thead>
      <tr>
        <CheckCell>
          <CheckBox type="checkbox" aria-label="全选" />
        </CheckCell>
        {columns.map(([name]) => (
          <HeadCell key={name}>
            <div>
              <Caret color="#fff" />
              {name}
            </div>
          </HeadCell>
        ))}
      </tr>
    </thead>
    <tbody>
      {rows.map((row, i) => (
        <tr key={row[0]}>
          <NumCell>{i + 1}</NumCell>
          {row.map((value, j) => (
            <Cell
              key={j}
              $odd={i % 2 === 0}
              $text={/^[a-z\u4e00-\u9fff]/.test(value)}
              $cjk={/^[\u4e00-\u9fff]+$/.test(value)}
            >
              {renderValue(value)}
            </Cell>
          ))}
        </tr>
      ))}
    </tbody>
  </Table>
);

const App = () => {
  const [keyword, setKeyword] = useState("");
  const [content, setContent] = useState("");

  return (
    <Page>
      <GlobalStyle />
      <Header>
        <HeaderTop>
          <Brand>
            <CloudLogo />
            <div>
              <BrandName>云梯端</BrandName>
              <BrandUrl>www.ytd.cn</BrandUrl>
            </div>
          </Brand>
          <HeaderRight>
            <Greeting>
              <User>
                <UserIcon />
                你好，
              </User>
              <b>[ admin ]</b>
              <span>2015年10月30日</span>
              <span>22:59:26 |</span>
              <a href="#standard">
                <b>切换到[标准版]</b>
              </a>
            </Greeting>
            <Tools>
              <HomeLink href="#home">
                <HomeIcon />
                <span>首页</span>
              </HomeLink>
              <SearchForm onSubmit={(e) => e.preventDefault()}>
                <SearchInput aria-label="搜索" value={keyword} onChange={(e) => setKeyword(e.target.value)} />
                <GreenButton $width="38px">搜索</GreenButton>
                <GreenButton $width="12px" type="button" aria-label="更多">
                  <Svg w={8} h={5}>
                    <path d="M1 .500L4 3.500 7 .500" fill="none" stroke="#fff" strokeWidth="1.500" />
                  </Svg>
                </GreenButton>
              </SearchForm>
              {links.map(([label, icon]) => (
                <ToolLink href="#tool" key={label}>
                  {icon}
                  {label}
                </ToolLink>
              ))}
              <Logout>
                <i>
                  <PowerIcon />
                </i>
                <span>注销</span>
              </Logout>
            </Tools>
          </HeaderRight>
        </HeaderTop>
        <HeaderStrip>
          <OrbIcon />
          <button aria-label="展开">
            <CaretOutlined />
          </button>
          <button aria-label="收起">
            <GreenUp />
          </button>
        </HeaderStrip>
      </Header>

      <Body>
        <Sidebar>
          {menu.map((item) => (
            <MenuItem href="#menu" key={item.label} $sub={item.sub} $active={item.active}>
              {item.icon}
              {item.label}
            </MenuItem>
          ))}
        </Sidebar>
        <Splitter>
          <SplitterHandle aria-label="折叠">
            <Svg w={4} h={8}>
              <path d="M4 0V8L0 4Z" />
            </Svg>
          </SplitterHandle>
        </Splitter>

        <Main>
          <Toolbar>
            <ToolbarGear>
              <CookieIcon size={15} faded />
            </ToolbarGear>
            {tools.map(([label, icon]) => (
              <ToolButton key={label}>
                {icon}
                {label}
              </ToolButton>
            ))}
          </Toolbar>
          <FilterBar>
            <IconButton aria-label="设置">
              <CookieIcon />
            </IconButton>
            <CheckLabel>
              <CheckBox type="checkbox" />
              并筛选
            </CheckLabel>
            <Select label="关系" width="58px" options={["或者", "并且"]} />
            <Select label="字段" width="118px" options={["非备注型字段"]} />
            <Select label="条件" width="77px" options={["包含", "等于"]} />
            <SearchCombo>
              <button aria-label="搜索方式">
                <Svg w={13}>
                  <circle cx="8" cy="5" r="3.500" fill="none" stroke="#2058c8" strokeWidth="2" />
                  <path d="M5.500 7.500L1 12" stroke="#2058c8" strokeWidth="2.500" />
                </Svg>
                <Caret color="#2058c8" w={6} h={3} />
              </button>
              <SearchInput aria-label="关键字" />
              <button aria-label="查找">
                <MagnifierIcon size={18} />
              </button>
            </SearchCombo>
            <FilterActions>
              <IconButton>全</IconButton>
              <IconButton aria-label="保存条件">
                <DiskIcon size={16} />
              </IconButton>
            </FilterActions>
          </FilterBar>
          <ContentRow>
            当前内容：
            <input value={content} onChange={(e) => setContent(e.target.value)} />
          </ContentRow>
          <Rail>
            <RailHandles>
              {["left", "middle", "right"].map((key) => (
                <button key={key} aria-label="收起">
                  <Svg w={6} h={4}>
                    <path d="M0 4H6L3 0Z" />
                  </Svg>
                </button>
              ))}
            </RailHandles>
          </Rail>

          <Work>
            <NavColumn>
              <b>»</b>
              <span>导航栏</span>
            </NavColumn>
            <GridPanel>
              <TableWrap>
                <DataGrid />
              </TableWrap>
              <GridFoot>
                <AddRow aria-label="新增">
                  <PlusIcon />
                </AddRow>
                <FootRight>
                  <ScrollBar>
                    <button aria-label="向左">
                      <Svg w={4} h={8}>
                        <path d="M4 0V8L0 4Z" fill="#fff" />
                      </Svg>
                    </button>
                    <ScrollThumb />
                    <button aria-label="向右">
                      <Svg w={4} h={8}>
                        <path d="M0 0V8L4 4Z" fill="#fff" />
                      </Svg>
                    </button>
                  </ScrollBar>
                  <Pager>
                    <PagerMenu aria-label="选项">
                      <Caret w={7} />
                    </PagerMenu>
                    <span>共4条&nbsp; 每页</span>
                    <Select flat label="每页" width="48px" options={["20", "50"]} />
                    <span>条 转到 第</span>
                    <Select flat label="页码" width="48px" options={["1"]} />
                    <IconButton aria-label="转到">
                      <EnterIcon />
                    </IconButton>
                    <span>页/共1页</span>
                    <PageLink href="#first">首页</PageLink>
                    <PageLink href="#prev">上一页</PageLink>
                    <PageLink href="#next">下一页</PageLink>
                    <PageLink href="#last">尾页</PageLink>
                    <PaneButton aria-label="上下布局">
                      <PaneIcon />
                    </PaneButton>
                    <PaneButton aria-label="左右布局">
                      <PaneIcon side />
                    </PaneButton>
                  </Pager>
                </FootRight>
              </GridFoot>
            </GridPanel>
          </Work>
        </Main>
      </Body>

      <TaskBar>
        <StartButton>
          <Svg w={23} vw={28} vh={28}>
            <Swirl />
          </Svg>
          菜单
        </StartButton>
        <button aria-label="桌面">
          <DesktopIcon />
        </button>
        <TaskTab>
          <ListIcon />
          员工列表
          <button aria-label="关闭">
            <Svg w={9}>
              <path d="M1 1L8 8M8 1L1 8" stroke="#000" strokeWidth="2" />
            </Svg>
          </button>
        </TaskTab>
        <button aria-label="更多">
          <CaretOutlined />
        </button>
      </TaskBar>
    </Page>
  );
};

export default App;
